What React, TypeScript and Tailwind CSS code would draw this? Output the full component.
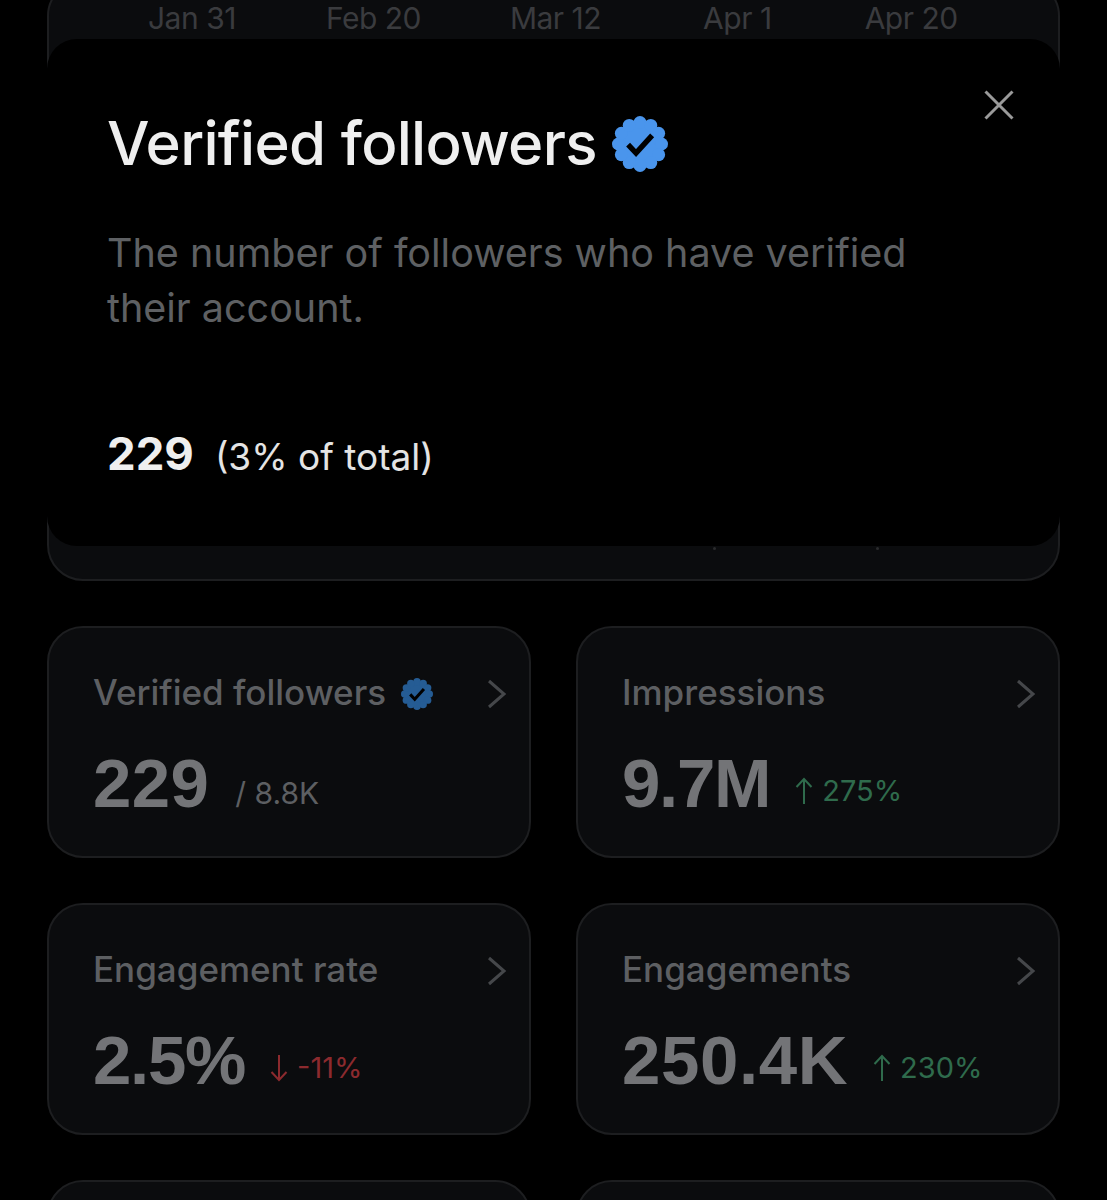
function VerifiedBadge({ className }: { className: string }) {
  const bumps = Array.from({ length: 12 }, (_, i) => (i * Math.PI) / 6)
  return (
    <svg viewBox="0 0 24 24" className={className}>
      <circle cx="12" cy="12" r="9.6" fill="currentColor" />
      {bumps.map((a) => (
        <circle key={a} cx={12 + 9.2 * Math.sin(a)} cy={12 - 9.2 * Math.cos(a)} r="2.8" fill="currentColor" />
      ))}
      <path d="M6.9 12.3l3.4 3.6 6.9-7.6" fill="none" stroke="#000" strokeWidth="2.3" />
    </svg>
  )
}

function Chevron() {
  return (
    <svg viewBox="0 0 20 30" className="ml-auto mt-[4px] h-[30px] w-[20px] shrink-0 text-[#45474a]">
      <path d="M2 2l15 13L2 28" fill="none" stroke="currentColor" strokeWidth="3" />
    </svg>
  )
}

function DeltaArrow({ up }: { up: boolean }) {
  return (
    <svg viewBox="0 0 18 28" className="mr-[9px] h-[28px] w-[18px] self-center">
      <path
        d={up ? 'M9 27V2M1.5 10L9 2l7.5 8' : 'M9 1v25M1.5 18L9 26l7.5-8'}
        fill="none"
        stroke="currentColor"
        strokeWidth="2"
      />
    </svg>
  )
}

const stats = [
  { label: 'Verified followers', value: '229', valueClass: 'tracking-[0.4px]', badge: true, total: '/ 8.8K' },
  { label: 'Impressions', value: '9.7M', valueClass: 'tracking-[-1.3px]', delta: '275%', up: true },
  { label: 'Engagement rate', value: '2.5%', valueClass: 'tracking-[-1.3px]', delta: '-11%', up: false },
  { label: 'Engagements', value: '250.4K', valueClass: 'tracking-[0.6px]', delta: '230%', up: true },
]

function StatCard({ stat }: { stat: (typeof stats)[number] }) {
  return (
    <div className="h-[232px] rounded-[36px] border-2 border-[#1d1e20] bg-[#0b0c0e] pl-[44px] pr-[22px] pt-[41px]">
      <div className="flex h-[46px] items-center">
        <span className="text-[35px] font-medium leading-[46px] text-[#5d5f62]">{stat.label}</span>
        {stat.badge && <VerifiedBadge className="ml-[15px] mt-[3px] h-[32px] w-[32px] text-[#255c94]" />}
        <Chevron />
      </div>
      <div className="mt-[33px] flex items-baseline">
        <span className={`font-['Liberation_Sans'] text-[69px] font-bold leading-[72px] text-[#737477] ${stat.valueClass}`}>
          {stat.value}
        </span>
        {stat.total && <span className="ml-[26px] -translate-y-[3px] text-[30px] text-[#5d5f62]">{stat.total}</span>}
        {stat.delta && (
          <span
            className={`ml-[25px] flex -translate-y-[2px] items-center text-[29px] ${stat.up ? 'text-[#2f6b4c]' : 'text-[#8c2a2e]'}`}
          >
            <DeltaArrow up={!!stat.up} />
            {stat.delta}
          </span>
        )}
      </div>
    </div>
  )
}

export default function App() {
  return (
    <div className="h-[1200px] overflow-hidden bg-black px-[47px] font-['Inter',sans-serif]">
      {/* Chart card behind the sheet */}
      <div className="relative -mt-[20px] h-[601px] rounded-[36px] border-2 border-[#1d1e20] bg-[#0b0c0e]">
        <div className="flex pt-[16px] text-[30px] leading-[40px] tracking-[-0.5px] text-[#3a3b3e]">
          <span className="ml-[99px]">Jan 31</span>
          <span className="ml-[90px]">Feb 20</span>
          <span className="ml-[89px]">Mar 12</span>
          <span className="ml-[102px]">Apr 1</span>
          <span className="ml-[93px]">Apr 20</span>
        </div>

        {/* Sheet */}
        <div className="absolute -left-[2px] -right-[2px] top-[57px] h-[507px] rounded-[30px] bg-black px-[60px] pt-[64px]">
          <svg viewBox="0 0 30 30" className="absolute right-[46px] top-[51px] h-[30px] w-[30px] text-[#9a9a9a]">
            <path d="M1.5 1.5l27 27M28.5 1.5l-27 27" fill="none" stroke="currentColor" strokeWidth="3" />
          </svg>
          <div className="flex items-center">
            <h1 className="text-[60px] font-medium leading-[80px] tracking-[-0.7px] text-[#efefef]">Verified followers</h1>
            <VerifiedBadge className="ml-[15px] mt-[2px] h-[56px] w-[56px] text-[#4a95ec]" />
          </div>
          <p className="mt-[43px] w-[830px] text-[39.5px] leading-[55px] text-[#5e6063]">
            The number of followers who have verified their account.
          </p>
          <div className="mt-[84px] flex items-baseline">
            <span className="text-[45.5px] font-bold text-[#efefef]">229</span>
            <span className="ml-[21px] text-[37px] text-[#e4e4e4]">(3% of total)</span>
          </div>
        </div>

        {/* Tick marks peeking out under the sheet */}
        <div className="absolute left-[664px] top-[565px] h-[3px] w-[3px] rounded-full bg-[#2a2b2d]" />
        <div className="absolute left-[827px] top-[565px] h-[3px] w-[3px] rounded-full bg-[#2a2b2d]" />
      </div>

      <div className="mt-[45px] grid grid-cols-2 gap-x-[45px] gap-y-[45px]">
        {stats.map((stat) => (
          <StatCard key={stat.label} stat={stat} />
        ))}
        <div className="h-[232px] rounded-[36px] border-2 border-[#1d1e20] bg-[#0b0c0e]" />
        <div className="h-[232px] rounded-[36px] border-2 border-[#1d1e20] bg-[#0b0c0e]" />
      </div>
    </div>
  )
}
